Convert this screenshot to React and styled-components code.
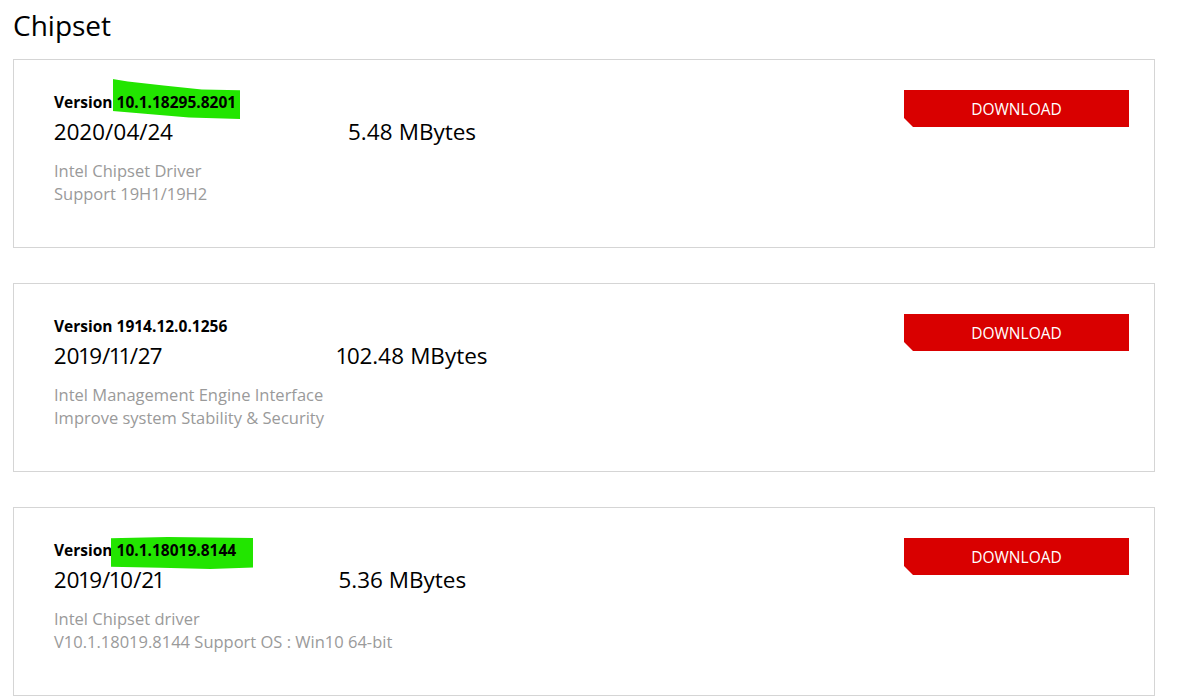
import React from "react";
import styled, { createGlobalStyle } from "styled-components";

const GlobalStyle = createGlobalStyle`
  *, *::before, *::after {
    box-sizing: border-box;
  }
  body {
    margin: 0;
    background: #fff;
    font-family: "Open Sans", "Noto Sans", sans-serif;
    color: #000;
  }
`;

// marker stroke drawn over some of the version numbers
const slantMark = {
  left: -4,
  right: -4,
  top: -12,
  bottom: -6,
  shape: "0% 0%, 12% 6%, 40% 16%, 70% 26%, 100% 28%, 100% 100%, 60% 96%, 30% 88%, 0% 80%",
};

const flatMark = {
  left: -6,
  right: -17,
  top: -2,
  bottom: -8,
  shape: "0% 4%, 40% 0%, 100% 3%, 100% 95%, 70% 100%, 35% 96%, 0% 93%",
};

const drivers = [
  {
    version: "10.1.18295.8201",
    mark: slantMark,
    date: "2020/04/24",
    size: "5.48 MBytes",
    lines: ["Intel Chipset Driver", "Support 19H1/19H2"],
  },
  {
    version: "1914.12.0.1256",
    mark: null,
    date: "2019/11/27",
    size: "102.48 MBytes",
    lines: ["Intel Management Engine Interface", "Improve system Stability & Security"],
  },
  {
    version: "10.1.18019.8144",
    mark: flatMark,
    date: "2019/10/21",
    size: "5.36 MBytes",
    lines: ["Intel Chipset driver", "V10.1.18019.8144 Support OS : Win10 64-bit"],
  },
];

const App = () => {
  return (
    <>
      <GlobalStyle />
      <Page>
        <Title>Chipset</Title>
        <List>
          {drivers.map((d) => (
            <Card key={d.version}>
              <Info>
                <VersionRow>
                  Version <Number $mark={d.mark}>{d.version}</Number>
                </VersionRow>
                <MetaRow>
                  <span>{d.date}</span>
                  <SizeText>{d.size}</SizeText>
                </MetaRow>
                <Desc>
                  {d.lines.map((l) => (
                    <div key={l}>{l}</div>
                  ))}
                </Desc>
              </Info>
              <DownloadButton>DOWNLOAD</DownloadButton>
            </Card>
          ))}
        </List>
      </Page>
    </>
  );
};

export default App;

const Page = styled.div`
  padding: 5px 28px 0 13px;
`;

const Title = styled.h1`
  margin: 0;
  font-size: 28px;
  font-weight: 400;
  line-height: 40px;
`;

const List = styled.div`
  display: flex;
  flex-direction: column;
  gap: 35px;
  margin-top: 14px;
`;

const Card = styled.div`
  display: flex;
  justify-content: space-between;
  align-items: flex-start;
  height: 189px;
  border: 1px solid #d5d5d5;
  padding: 30px 25px 0 40px;
`;

const Info = styled.div`
  display: flex;
  flex-direction: column;
`;

const VersionRow = styled.div`
  font-size: 15.5px;
  font-weight: 700;
  line-height: 24px;
`;

const Number = styled.span`
  position: relative;
  z-index: 0;
  &::before {
    content: "";
    display: ${(p) => (p.$mark ? "block" : "none")};
    position: absolute;
    z-index: -1;
    left: ${(p) => (p.$mark ? p.$mark.left : 0)}px;
    right: ${(p) => (p.$mark ? p.$mark.right : 0)}px;
    top: ${(p) => (p.$mark ? p.$mark.top : 0)}px;
    bottom: ${(p) => (p.$mark ? p.$mark.bottom : 0)}px;
    background: #22e500;
    clip-path: polygon(${(p) => (p.$mark ? p.$mark.shape : "0 0")});
  }
`;

const MetaRow = styled.div`
  display: flex;
  margin-top: 2px;
  font-size: 22.5px;
  line-height: 32px;
  font-variant-numeric: proportional-nums;
`;

const SizeText = styled.span`
  margin-left: 175px;
`;

const Desc = styled.div`
  margin-top: 11px;
  color: #9a9a9a;
  font-size: 16.5px;
  line-height: 23px;
`;

const DownloadButton = styled.button`
  width: 225px;
  height: 37px;
  border: none;
  background: #d90000;
  color: #fff;
  font-family: "Open Sans", "Noto Sans", sans-serif;
  font-size: 15.5px;
  cursor: pointer;
  clip-path: polygon(0 0, 100% 0, 100% 100%, 9px 100%, 0 calc(100% - 9px));
`;
